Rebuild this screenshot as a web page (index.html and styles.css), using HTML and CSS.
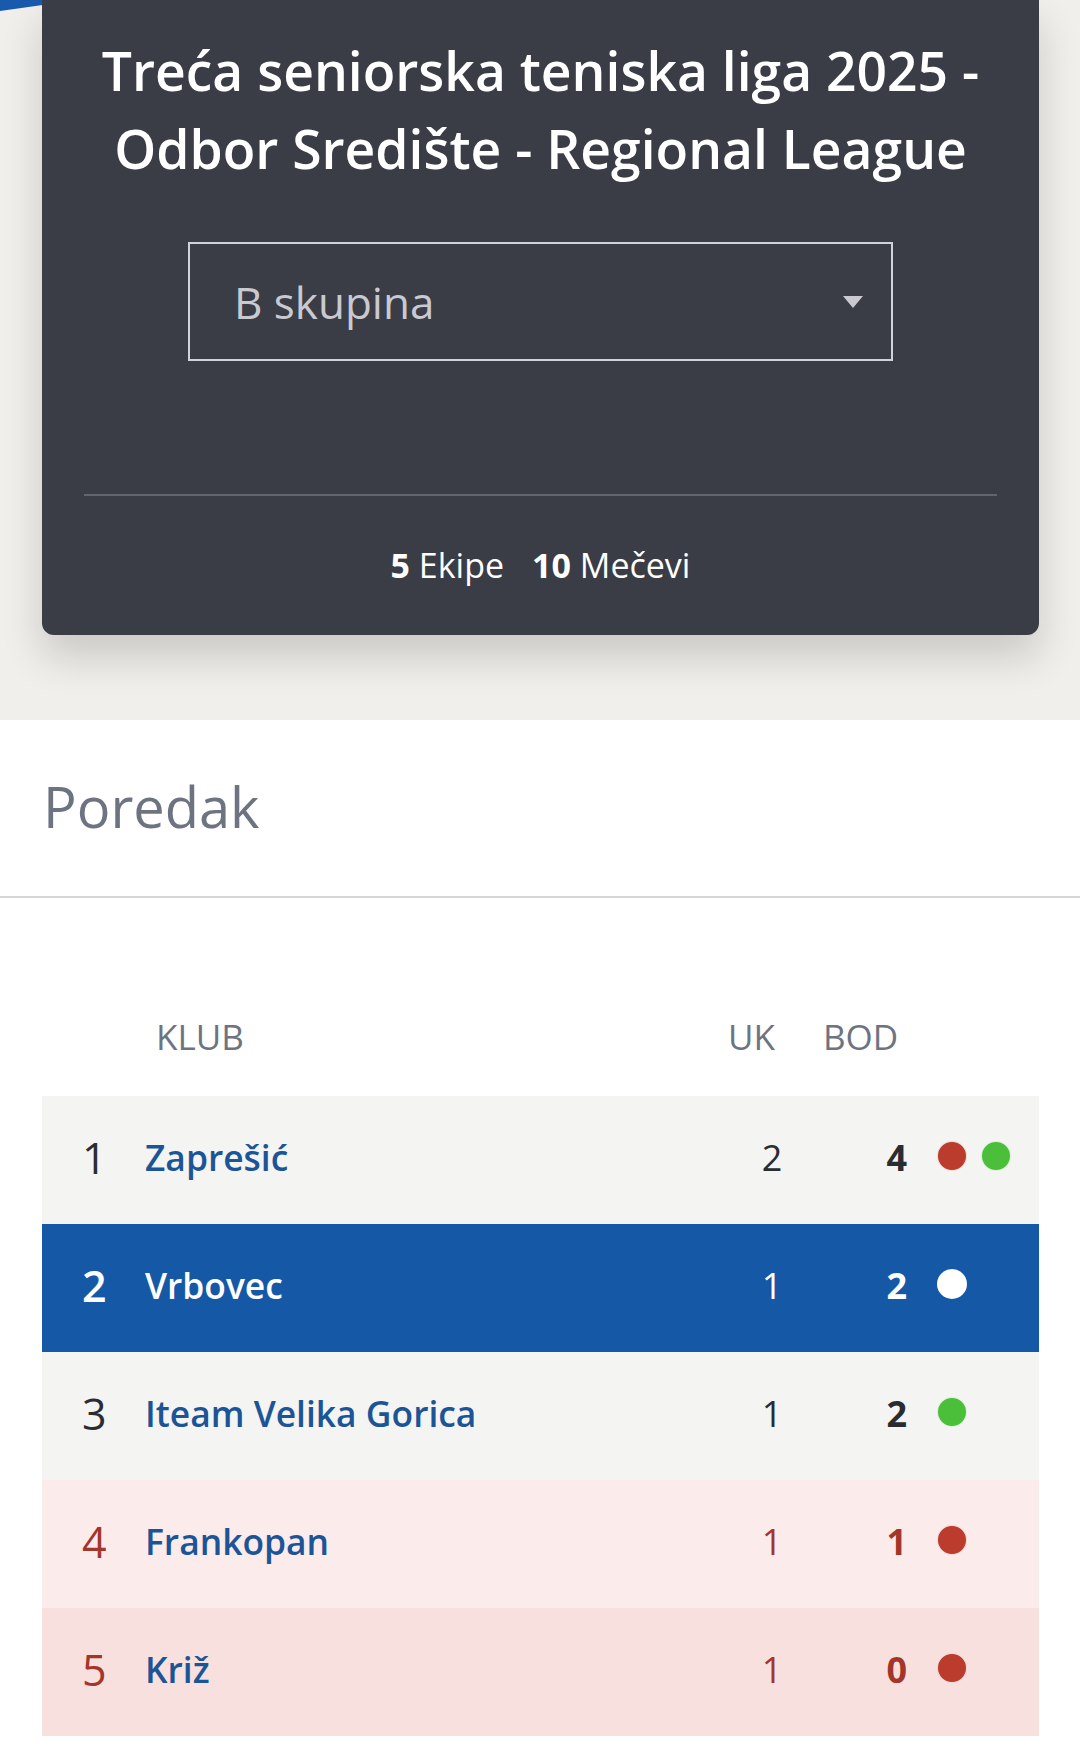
FILE: index.html
```html
<!DOCTYPE html>
<html lang="hr">
<head>
<meta charset="utf-8">
<title>Poredak</title>
<link rel="stylesheet" href="styles.css">
</head>
<body>
<section class="hero">
  <div class="hero-stripe"></div>
  <div class="card">
    <h1 class="card-title">Treća seniorska teniska liga 2025 - Odbor Središte - Regional League</h1>
    <div class="select">
      <span class="select-value">B skupina</span>
      <svg class="select-arrow" width="20" height="12" viewBox="0 0 20 12"><path d="M0 0 H20 L10 12 Z" fill="#c9cad0"/></svg>
    </div>
    <div class="card-divider"></div>
    <div class="stats">
      <span class="stat"><b>5</b> Ekipe</span>
      <span class="stat"><b>10</b> Mečevi</span>
    </div>
  </div>
</section>

<section class="standings">
  <h2 class="section-title">Poredak</h2>
  <div class="section-divider"></div>
  <div class="table">
    <div class="thead">
      <span class="th th-club">KLUB</span>
      <span class="th th-uk">UK</span>
      <span class="th th-bod">BOD</span>
    </div>
    <div class="row row-light">
      <span class="rank">1</span>
      <span class="club">Zaprešić</span>
      <span class="uk">2</span>
      <span class="bod">4</span>
      <span class="form"><i class="dot dot-red"></i><i class="dot dot-green"></i></span>
    </div>
    <div class="row row-active">
      <span class="rank">2</span>
      <span class="club">Vrbovec</span>
      <span class="uk">1</span>
      <span class="bod">2</span>
      <span class="form"><i class="dot dot-white"></i></span>
    </div>
    <div class="row row-light">
      <span class="rank">3</span>
      <span class="club">Iteam Velika Gorica</span>
      <span class="uk">1</span>
      <span class="bod">2</span>
      <span class="form"><i class="dot dot-green"></i></span>
    </div>
    <div class="row row-danger1">
      <span class="rank">4</span>
      <span class="club">Frankopan</span>
      <span class="uk">1</span>
      <span class="bod">1</span>
      <span class="form"><i class="dot dot-red"></i></span>
    </div>
    <div class="row row-danger2">
      <span class="rank">5</span>
      <span class="club">Križ</span>
      <span class="uk">1</span>
      <span class="bod">0</span>
      <span class="form"><i class="dot dot-red"></i></span>
    </div>
  </div>
</section>
</body>
</html>
```

FILE: styles.css
```css
* { box-sizing: border-box; }

html, body {
  margin: 0;
  padding: 0;
  background: #ffffff;
  font-family: "Open Sans", "Noto Sans", sans-serif;
}

.hero {
  position: relative;
  overflow: hidden;
  background: #f0efeb;
  height: 720px;
  padding: 0 41px 0 42px;
}

.hero-stripe {
  position: absolute;
  left: 0;
  top: -89px;
  width: 300px;
  height: 100px;
  background: #1a5aad;
  transform: rotate(-8deg);
  transform-origin: left bottom;
}

.card {
  position: relative;
  height: 635px;
  background: #3a3c46;
  border-radius: 0 0 12px 12px;
  box-shadow: 0 22px 40px rgba(0, 0, 0, 0.16);
  display: flex;
  flex-direction: column;
  align-items: center;
  padding: 32px 20px 0;
}

.card-title {
  margin: 0;
  color: #ffffff;
  font-size: 53.4px;
  font-weight: 600;
  line-height: 78px;
  text-align: center;
}

.select {
  margin-top: 54px;
  width: 705px;
  height: 119px;
  border: 2px solid #d2d3d8;
  display: flex;
  align-items: center;
  justify-content: space-between;
  padding: 0 28px 0 44px;
}

.select-value {
  color: #c9cad0;
  font-size: 44px;
  font-weight: 400;
}

.select-arrow { display: block; }

.card-divider {
  margin: 133px 22px 0;
  align-self: stretch;
  height: 2px;
  background: #62646f;
}

.stats {
  margin-top: 46px;
  display: flex;
  gap: 28px;
  color: #ffffff;
  font-size: 34px;
}

.stat b { font-weight: 700; }

.standings {
  background: #ffffff;
  padding-top: 48px;
}

.section-title {
  margin: 0;
  padding-left: 43px;
  font-size: 56px;
  font-weight: 400;
  color: #6e7381;
  line-height: 76px;
}

.section-divider {
  margin-top: 52px;
  height: 2px;
  background: #d6d6d6;
}

.table {
  margin: 0 41px 0 42px;
  padding-top: 108px;
}

.thead {
  display: flex;
  align-items: baseline;
  height: 90px;
  padding-top: 7px;
  color: #6e7381;
  font-size: 35px;
}

.th-club { flex: 1; padding-left: 114px; }
.th-uk { width: 95px; }
.th-bod { width: 216px; }

.row {
  display: flex;
  align-items: center;
  height: 128px;
  padding-left: 40px;
  padding-bottom: 6px;
  font-size: 36px;
  color: #2b2c31;
}

.rank { width: 63px; font-size: 43px; font-weight: 500; }
.club { flex: 1; font-size: 35.4px; font-weight: 600; color: #1c5597; }
.uk { width: 108px; text-align: center; }
.bod { width: 99px; text-align: right; padding-right: 18px; font-weight: 700; }
.form { width: 114px; display: flex; gap: 14px; padding-left: 12px; margin-top: -2px; }

.dot {
  width: 30px;
  height: 30px;
  border-radius: 50%;
  border: 1px solid rgba(255, 255, 255, 0.8);
  display: block;
}
.dot-red { background: #bb3b2c; }
.dot-green { background: #4cbf3a; }
.dot-white { background: #ffffff; }

.row-light { background: #f4f4f2; }
.row-active { background: #1558a6; color: #ffffff; }
.row-active .club { color: #ffffff; }
.row-active .rank { font-weight: 600; }
.row-danger1 { background: #fbeceb; color: #a3362b; }
.row-danger2 { background: #f7e0de; color: #a3362b; }
```
